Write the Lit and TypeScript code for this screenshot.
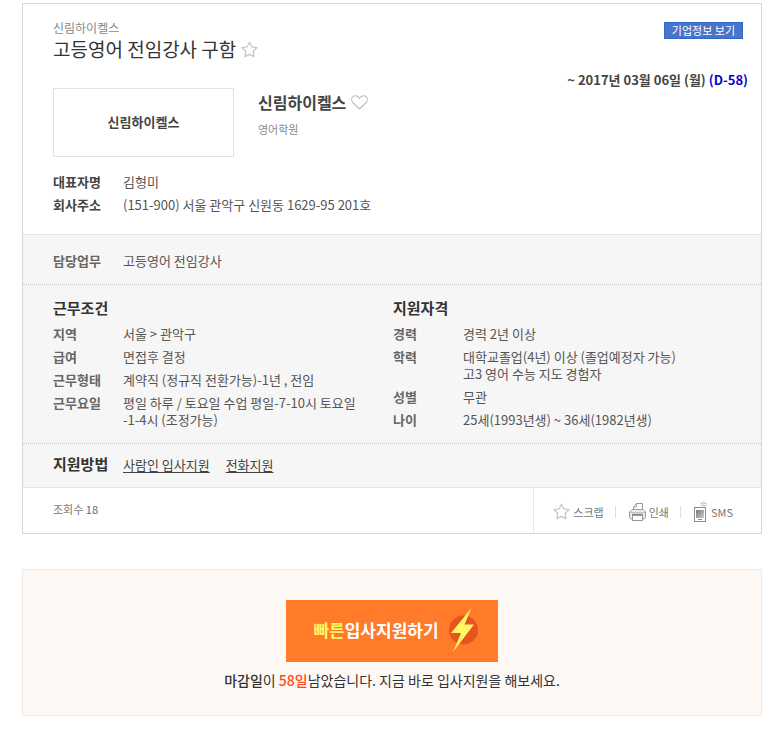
import { LitElement, html, css, svg } from "lit";
import { customElement, property } from "lit/decorators.js";

type Row = { label: string; lines: string[] };

const company: Row[] = [
  { label: "대표자명", lines: ["김형미"] },
  { label: "회사주소", lines: ["(151-900) 서울 관악구 신원동 1629-95 201호"] },
];
const duties: Row[] = [{ label: "담당업무", lines: ["고등영어 전임강사"] }];
const conditions: Row[] = [
  { label: "지역", lines: ["서울 > 관악구"] },
  { label: "급여", lines: ["면접후 결정"] },
  { label: "근무형태", lines: ["계약직 (정규직 전환가능)-1년 , 전임"] },
  { label: "근무요일", lines: ["평일 하루 / 토요일 수업 평일-7-10시 토요일", "-1-4시 (조정가능)"] },
];
const requirements: Row[] = [
  { label: "경력", lines: ["경력 2년 이상"] },
  { label: "학력", lines: ["대학교졸업(4년) 이상 (졸업예정자 가능)", "고3 영어 수능 지도 경험자"] },
  { label: "성별", lines: ["무관"] },
  { label: "나이", lines: ["25세(1993년생) ~ 36세(1982년생)"] },
];

const star = html`<svg width="17" height="17" viewBox="0 0 17 17" aria-hidden="true">
  ${svg`<path d="M8.5 1.2 10.7 5.8 16 6.5 12.2 10.2 13 15.6 8.5 13.4 4 15.6 4.8 10.2 1 6.5 6.3 5.8Z" fill="#fff" stroke="#c4c4c4" stroke-width="1.2" stroke-linejoin="round"/>`}
</svg>`;
const heart = html`<svg width="17" height="15" viewBox="0 0 17 15" aria-hidden="true">
  ${svg`<path d="M8.5 14 2.2 8C.4 6 .3 3.3 1.7 1.9 3.6.1 7 .4 8.5 3.4 10 .4 13.4.1 15.3 1.9 16.7 3.3 16.6 6 14.8 8Z" fill="#fff" stroke="#bdbdbd" stroke-width="1.1" stroke-linejoin="round"/>`}
</svg>`;
const printer = html`<svg width="17" height="18" viewBox="0 0 17 18" aria-hidden="true">
  ${svg`<path d="M4.5 7.5V4L7.5.5H13.5V7.5" fill="#fff" stroke="#999"/>
  <path d="M7.5.5V4H4.5" fill="none" stroke="#aaa"/>
  <path d="M3 6.500H14L16.500 9V14.500L15 16H2L.5 14.500V9Z" fill="#ededed" stroke="#999"/>
  <path d="M1 9.500H16" stroke="#c4c4c4"/><path d="M3 11.500H14" stroke="#888" stroke-width="1.500"/>
  <rect x="3.500" y="12.500" width="10" height="5" fill="#fff" stroke="#999"/>`}
</svg>`;
const phone = html`<svg width="13" height="20" viewBox="0 0 13 20" aria-hidden="true">
  ${svg`<defs><linearGradient id="g" x1="0" y1="0" x2="1" y2="1"><stop offset="0" stop-color="#777"/><stop offset="1" stop-color="#ccc"/></linearGradient></defs>
  <path d="M6 2.5Q9.5-.9 13 2.500M7.500 4Q9.500 2.300 11.500 4" fill="none" stroke="#aaa"/>
  <rect x=".5" y="5.500" width="11" height="14" fill="#fff" stroke="#8c8c8c"/>
  <rect x="2" y="8" width="8" height="8" fill="url(#g)"/><path d="M4 17.500H8" stroke="#888"/>`}
</svg>`;
const bolt = html`<svg width="31" height="44" viewBox="0 0 31 44" aria-hidden="true">
  ${svg`<circle cx="15.500" cy="22" r="14.500" fill="#e8541e"/>
  <path d="M23.500 0 3 25H13L5 44 26 16.500H16.500Z" fill="#fff766"/>`}
</svg>`;

@customElement("info-rows")
class InfoRows extends LitElement {
  @property({ attribute: false }) rows: Row[] = [];
  @property({ type: Boolean, reflect: true }) strong = false;

  static styles = css`
    :host { display: block; --label: #666; }
    :host([strong]) { --label: #444; }
    .rows { display: grid; grid-template-columns: 70px 1fr; row-gap: 6px; margin: 0; font-size: 13px; line-height: 17px; }
    .label { color: var(--label); font-weight: 700; }
    .value { margin: 0; color: #555; }
    .line { display: block; }
  `;

  render() {
    return html`<dl class="rows">
      ${this.rows.map(
        (r) => html`<dt class="label">${r.label}</dt>
          <dd class="value">${r.lines.map((l) => html`<span class="line">${l}</span>`)}</dd>`
      )}
    </dl>`;
  }
}

@customElement("app-root")
class AppRoot extends LitElement {
  static styles = css`
    :host { display: block; padding: 3px 18px 29px 22px; background: #fff; color: #444; font-family: "Noto Sans CJK KR", "Noto Sans", sans-serif; }
    button { font-family: inherit; margin: 0; padding: 0; border: 0; background: none; cursor: pointer; }
    h1, h2, h3, p { margin: 0; }
    svg { display: block; flex: none; }
    .card { border: 1px solid #d6d6d6; }
    .summary { padding: 16px 13px 21px 30px; border-bottom: 1px solid #e5e5e5; }
    .header { display: flex; justify-content: space-between; }
    .name { font-size: 12px; line-height: 16px; color: #888; }
    .title-row { display: flex; align-items: center; gap: 5px; margin-top: 1px; }
    .title { font-size: 19px; line-height: 24px; font-weight: 400; color: #333; }
    .side { display: flex; flex-direction: column; align-items: flex-end; padding-top: 2px; }
    .view { height: 17px; margin: 0 5px 33px 0; padding: 0 7px 1px; border: 1px solid #2f67cb; background: #4a74c9; color: #fff; font-size: 11px; line-height: 14px; }
    .date { font-size: 13px; line-height: 16px; font-weight: 700; }
    .dday { color: #10c; }
    .company { display: flex; gap: 24px; margin-bottom: 16px; }
    .logo { display: grid; place-items: center; box-sizing: border-box; width: 181px; height: 69px; padding-bottom: 3px; border: 1px solid #e2e2e2; font-size: 13px; font-weight: 700; }
    .company-row { display: flex; align-items: center; gap: 5px; margin-top: 4px; }
    .company-name { font-size: 16px; line-height: 20px; font-weight: 700; }
    .category { margin-top: 9px; font-size: 11px; line-height: 16px; color: #888; }
    .detail { background: #f6f6f6; padding: 0 30px; border-bottom: 1px dotted #c4c4c4; }
    .duties { padding-top: 17px; padding-bottom: 15px; }
    .columns { display: grid; grid-template-columns: 1fr 1fr; column-gap: 2px; padding-top: 13px; padding-bottom: 15px; }
    .heading { font-size: 15px; line-height: 20px; font-weight: 700; color: #333; }
    .columns .heading { margin-bottom: 7px; }
    .methods { display: flex; align-items: center; padding-top: 10px; padding-bottom: 13px; border-bottom: 1px solid #e5e5e5; }
    .methods .heading { width: 70px; }
    .method { margin-right: 16px; color: #444; font-size: 13px; line-height: 17px; text-underline-offset: 2px; }
    .footer { display: flex; justify-content: space-between; font-size: 11px; line-height: 43px; color: #777; }
    .views { padding: 0 0 2px 30px; }
    .count { color: #667; }
    .tools { display: flex; align-items: center; padding: 2px 28px 0 19px; border-left: 1px solid #e5e5e5; }
    .tool { display: flex; align-items: center; gap: 3px; color: #777; font-size: 11px; line-height: 16px; }
    .tool + .tool::before { content: ""; width: 1px; height: 12px; margin: 0 10px 0 11px; background: #ddd; }
    .tool:last-child { gap: 4px; }
    .tool:last-child::before { margin-right: 9px; }
    .apply { display: flex; flex-direction: column; align-items: center; margin-top: 35px; padding: 30px 20px 25px; border: 1px solid #f8e8dc; background: #fef8f4; }
    .apply-button { display: flex; align-items: center; padding: 8px 19px 10px 27px; background: #ff7a29; color: #fff; font-size: 17px; line-height: 24px; font-weight: 700; }
    .fast { color: #fff766; }
    .apply-button svg { margin-left: 9px; }
    .notice { margin-top: 8px; font-size: 14px; line-height: 20px; color: #333; }
    .notice b { font-weight: 500; }
    .notice .left { color: #ff4b14; }
  `;

  render() {
    return html`
      <section class="card">
        <div class="summary">
          <div class="header">
            <div>
              <p class="name">신림하이켈스</p>
              <div class="title-row"><h1 class="title">고등영어 전임강사 구함</h1><button aria-label="스크랩">${star}</button></div>
            </div>
            <div class="side">
              <button class="view">기업정보 보기</button>
              <p class="date">~ 2017년 03월 06일 (월) <span class="dday">(D-58)</span></p>
            </div>
          </div>
          <div class="company">
            <div class="logo">신림하이켈스</div>
            <div>
              <div class="company-row"><h2 class="company-name">신림하이켈스</h2><button aria-label="관심기업">${heart}</button></div>
              <p class="category">영어학원</p>
            </div>
          </div>
          <info-rows strong .rows=${company}></info-rows>
        </div>
        <div class="detail duties"><info-rows .rows=${duties}></info-rows></div>
        <div class="detail columns">
          <div><h3 class="heading">근무조건</h3><info-rows .rows=${conditions}></info-rows></div>
          <div><h3 class="heading">지원자격</h3><info-rows .rows=${requirements}></info-rows></div>
        </div>
        <div class="detail methods">
          <h3 class="heading">지원방법</h3>
          <a class="method" href="#">사람인 입사지원</a><a class="method" href="#">전화지원</a>
        </div>
        <div class="footer">
          <div class="views">조회수 <span class="count">18</span></div>
          <div class="tools">
            <button class="tool">${star}스크랩</button>
            <button class="tool">${printer}인쇄</button>
            <button class="tool">${phone}SMS</button>
          </div>
        </div>
      </section>
      <section class="apply">
        <button class="apply-button"><span class="fast">빠른</span>입사지원하기${bolt}</button>
        <p class="notice"><b>마감일</b>이 <b class="left">58일</b>남았습니다. 지금 바로 입사지원을 해보세요.</p>
      </section>
    `;
  }
}
